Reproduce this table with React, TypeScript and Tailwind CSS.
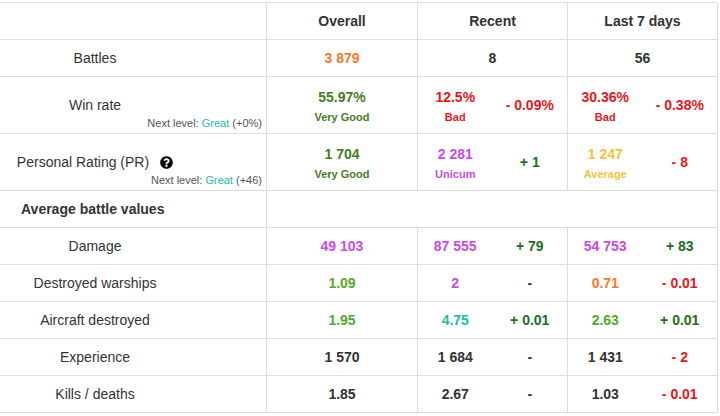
import React from 'react'
import { FaQuestionCircle } from 'react-icons/fa'

const orange = 'text-[#f47a2a]'
const veryGood = 'text-[#467d1f]'
const good = 'text-[#56a82a]'
const great = 'text-[#29b8a8]'
const unicum = 'text-[#c84ae8]'
const average = 'text-[#f5c23c]'
const bad = 'text-[#e8161a]'
const plus = 'text-[#1f6e1f]'
const dark = 'text-[#333333]'

const cell = 'border-r border-b border-[#dddddd]'

const Stat: React.FC<{ value: string; color: string; label?: string }> = ({ value, color, label }) => (
  <div className="flex flex-col items-center">
    <span className={`text-[14px] leading-5 font-bold ${color}`}>{value}</span>
    {label && <span className={`mt-[3px] text-[11px] leading-[14px] font-bold ${color}`}>{label}</span>}
  </div>
)

const Delta: React.FC<{ value: string; color: string }> = ({ value, color }) => (
  <span className={`text-[14px] leading-5 font-bold ${color}`}>{value}</span>
)

const Split: React.FC<{ left: React.ReactNode; right: React.ReactNode }> = ({ left, right }) => (
  <div className={`${cell} grid grid-cols-2 items-center`}>
    <div className="flex justify-center">{left}</div>
    <div className="flex justify-center">{right}</div>
  </div>
)

const Label: React.FC<{ children: React.ReactNode; next?: string }> = ({ children, next }) =>
  next ? (
    <div className={`${cell} flex flex-col`}>
      <div className="pt-[18px] pr-[76px] flex items-center justify-center text-[14px] leading-5">{children}</div>
      <div className="mt-px pr-[4px] text-right text-[11px] leading-[14px] text-[#555555]">
        Next level: <span className={great}>Great</span> ({next})
      </div>
    </div>
  ) : (
    <div className={`${cell} flex items-center justify-center pr-[76px] text-[14px] leading-5`}>{children}</div>
  )

const Center: React.FC<{ children: React.ReactNode }> = ({ children }) => (
  <div className={`${cell} flex items-center justify-center`}>{children}</div>
)

export default function App() {
  return (
    <div className="w-[720px] h-[416px] bg-white pt-[2px] overflow-hidden font-['Liberation_Sans',Arial,sans-serif] text-[#333333]">
      <div className="w-[717px] border-t border-[#dddddd] grid grid-cols-[267px_151px_150px_150px] grid-rows-[37px_37px_57px_57px_37px_37px_37px_37px_37px_37px]">
        {/* header */}
        <div className={cell} />
        <Center><span className="text-[14px] font-bold">Overall</span></Center>
        <Center><span className="text-[14px] font-bold">Recent</span></Center>
        <Center><span className="text-[14px] font-bold">Last 7 days</span></Center>

        <Label>Battles</Label>
        <Center><Stat value="3 879" color={orange} /></Center>
        <Center><Stat value="8" color={dark} /></Center>
        <Center><Stat value="56" color={dark} /></Center>

        <Label next="+0%">Win rate</Label>
        <Center><Stat value="55.97%" label="Very Good" color={veryGood} /></Center>
        <Split left={<Stat value="12.5%" label="Bad" color={bad} />} right={<Delta value="- 0.09%" color={bad} />} />
        <Split left={<Stat value="30.36%" label="Bad" color={bad} />} right={<Delta value="- 0.38%" color={bad} />} />

        <Label next="+46">
          <span>Personal Rating (PR)</span>
          <FaQuestionCircle className="ml-[11px] text-black" size={13} />
        </Label>
        <Center><Stat value="1 704" label="Very Good" color={veryGood} /></Center>
        <Split left={<Stat value="2 281" label="Unicum" color={unicum} />} right={<Delta value="+ 1" color={plus} />} />
        <Split left={<Stat value="1 247" label="Average" color={average} />} right={<Delta value="- 8" color={bad} />} />

        <div className={`${cell} flex items-center pl-[21px] text-[14px] font-bold`}>Average battle values</div>
        <div className={`${cell} col-span-3`} />

        <Label>Damage</Label>
        <Center><Stat value="49 103" color={unicum} /></Center>
        <Split left={<Stat value="87 555" color={unicum} />} right={<Delta value="+ 79" color={plus} />} />
        <Split left={<Stat value="54 753" color={unicum} />} right={<Delta value="+ 83" color={plus} />} />

        <Label>Destroyed warships</Label>
        <Center><Stat value="1.09" color={good} /></Center>
        <Split left={<Stat value="2" color={unicum} />} right={<Delta value="-" color={dark} />} />
        <Split left={<Stat value="0.71" color={orange} />} right={<Delta value="- 0.01" color={bad} />} />

        <Label>Aircraft destroyed</Label>
        <Center><Stat value="1.95" color={good} /></Center>
        <Split left={<Stat value="4.75" color={great} />} right={<Delta value="+ 0.01" color={plus} />} />
        <Split left={<Stat value="2.63" color={good} />} right={<Delta value="+ 0.01" color={plus} />} />

        <Label>Experience</Label>
        <Center><Stat value="1 570" color={dark} /></Center>
        <Split left={<Stat value="1 684" color={dark} />} right={<Delta value="-" color={dark} />} />
        <Split left={<Stat value="1 431" color={dark} />} right={<Delta value="- 2" color={bad} />} />

        <Label>Kills / deaths</Label>
        <Center><Stat value="1.85" color={dark} /></Center>
        <Split left={<Stat value="2.67" color={dark} />} right={<Delta value="-" color={dark} />} />
        <Split left={<Stat value="1.03" color={dark} />} right={<Delta value="- 0.01" color={bad} />} />
      </div>
    </div>
  )
}
